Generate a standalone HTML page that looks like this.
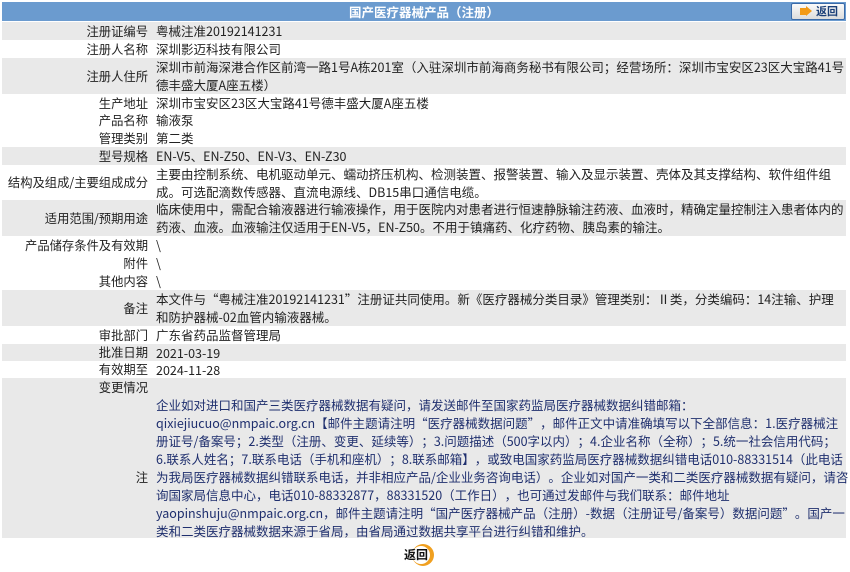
<!DOCTYPE html>
<html><head><meta charset="utf-8"><style>
*{margin:0;padding:0;box-sizing:border-box}
body{width:850px;height:572px;background:#fff;font-family:"Noto Sans CJK SC","Liberation Sans",sans-serif;font-size:12.3px;color:#222;position:relative;overflow:hidden;text-spacing-trim:space-all}
.r{position:absolute;left:2px;width:844px}
.g{background:#e9e9e9}
.l{position:absolute;left:0;width:146px;text-align:right;white-space:nowrap}
.v{position:absolute;left:154px;white-space:nowrap;line-height:18px;font-size:12.5px}
.hd{position:absolute;left:2px;top:2px;width:844px;height:19px;background:#6b9bcf;color:#fff;font-weight:bold;text-align:center;line-height:19px;font-size:12.5px}
.btn{position:absolute;left:791px;top:3px;width:54px;height:17px;border:1px solid #3a6aa8;border-radius:2px;background:linear-gradient(#fafafa,#dcdcdc);color:#1b3f78;font-weight:bold;font-size:11px;line-height:15px}
.note{color:#1f2f6e}
</style></head><body>
<div class="hd">国产医疗器械产品（注册）</div>
<div class="btn"><span style="position:absolute;left:8px;top:4px;width:6px;height:7px;background:#f29a17"></span><span style="position:absolute;left:14px;top:2px;border-left:6px solid #f29a17;border-top:5.5px solid transparent;border-bottom:5.5px solid transparent"></span><span style="position:absolute;left:24px;top:0">返回</span></div>

<div class="r g" style="top:22px;height:18px"><span class="l" style="top:0;line-height:18px">注册证编号</span><span class="v" style="top:0">粤械注准20192141231</span></div>
<div class="r" style="top:40px;height:18px"><span class="l" style="line-height:18px">注册人名称</span><span class="v">深圳影迈科技有限公司</span></div>
<div class="r g" style="top:58px;height:36px"><span class="l" style="line-height:36px">注册人住所</span><span class="v">深圳市前海深港合作区前湾一路1号A栋201室（入驻深圳市前海商务秘书有限公司；经营场所：深圳市宝安区23区大宝路41号<br>德丰盛大厦A座五楼）</span></div>
<div class="r" style="top:94px;height:18px"><span class="l" style="line-height:18px">生产地址</span><span class="v">深圳市宝安区23区大宝路41号德丰盛大厦A座五楼</span></div>
<div class="r" style="top:111px;height:18px"><span class="l" style="line-height:18px">产品名称</span><span class="v">输液泵</span></div>
<div class="r" style="top:129px;height:18px"><span class="l" style="line-height:18px">管理类别</span><span class="v">第二类</span></div>
<div class="r g" style="top:147px;height:18px"><span class="l" style="line-height:18px">型号规格</span><span class="v">EN-V5、EN-Z50、EN-V3、EN-Z30</span></div>
<div class="r" style="top:165px;height:35px"><span class="l" style="line-height:35px">结构及组成/主要组成成分</span><span class="v">主要由控制系统、电机驱动单元、蠕动挤压机构、检测装置、报警装置、输入及显示装置、壳体及其支撑结构、软件组件组<br>成。可选配滴数传感器、直流电源线、DB15串口通信电缆。</span></div>
<div class="r g" style="top:200px;height:36px"><span class="l" style="line-height:36px">适用范围/预期用途</span><span class="v">临床使用中，需配合输液器进行输液操作，用于医院内对患者进行恒速静脉输注药液、血液时，精确定量控制注入患者体内的<br>药液、血液。血液输注仅适用于EN-V5，EN-Z50。不用于镇痛药、化疗药物、胰岛素的输注。</span></div>
<div class="r" style="top:236px;height:18px"><span class="l" style="line-height:18px">产品储存条件及有效期</span><span class="v">\</span></div>
<div class="r" style="top:254px;height:18px"><span class="l" style="line-height:18px">附件</span><span class="v">\</span></div>
<div class="r" style="top:272px;height:18px"><span class="l" style="line-height:18px">其他内容</span><span class="v">\</span></div>
<div class="r g" style="top:290px;height:36px"><span class="l" style="line-height:36px">备注</span><span class="v">本文件与“粤械注准20192141231”注册证共同使用。新《医疗器械分类目录》管理类别：Ⅱ类，分类编码：14注输、护理<br>和防护器械-02血管内输液器械。</span></div>
<div class="r" style="top:326px;height:18px"><span class="l" style="line-height:18px">审批部门</span><span class="v">广东省药品监督管理局</span></div>
<div class="r g" style="top:344px;height:17px"><span class="l" style="line-height:17px">批准日期</span><span class="v" style="line-height:17px">2021-03-19</span></div>
<div class="r" style="top:361px;height:17px"><span class="l" style="line-height:17px">有效期至</span><span class="v" style="line-height:17px">2024-11-28</span></div>
<div class="r g" style="top:378px;height:160px">
<span class="l" style="top:0;line-height:18px">变更情况</span>
<span class="l" style="top:90px;line-height:18px">注</span>
<span class="v note" style="top:18px">企业如对进口和国产三类医疗器械数据有疑问，请发送邮件至国家药监局医疗器械数据纠错邮箱：<br>qixiejiucuo@nmpaic.org.cn【邮件主题请注明“医疗器械数据问题”，邮件正文中请准确填写以下全部信息：1.医疗器械注<br>册证号/备案号；2.类型（注册、变更、延续等）；3.问题描述（500字以内）；4.企业名称（全称）；5.统一社会信用代码；<br>6.联系人姓名；7.联系电话（手机和座机）；8.联系邮箱】，或致电国家药监局医疗器械数据纠错电话010-88331514（此电话<br>为我局医疗器械数据纠错联系电话，并非相应产品/企业业务咨询电话）。企业如对国产一类和二类医疗器械数据有疑问，请咨<br>询国家局信息中心，电话010-88332877，88331520（工作日），也可通过发邮件与我们联系：邮件地址<br>yaopinshuju@nmpaic.org.cn，邮件主题请注明“国产医疗器械产品（注册）-数据（注册证号/备案号）数据问题”。国产一<br>类和二类医疗器械数据来源于省局，由省局通过数据共享平台进行纠错和维护。</span>
</div>
<div style="position:absolute;left:412px;top:544px;width:22px;height:22px;border-radius:50%;background:#f0a020"></div>
<div style="position:absolute;left:412px;top:546px;width:18px;height:18px;border-radius:50%;background:#fff"></div>
<div style="position:absolute;left:404px;top:547px;font-weight:bold;font-size:12px;color:#111;line-height:16px">返回</div>
</body></html>
